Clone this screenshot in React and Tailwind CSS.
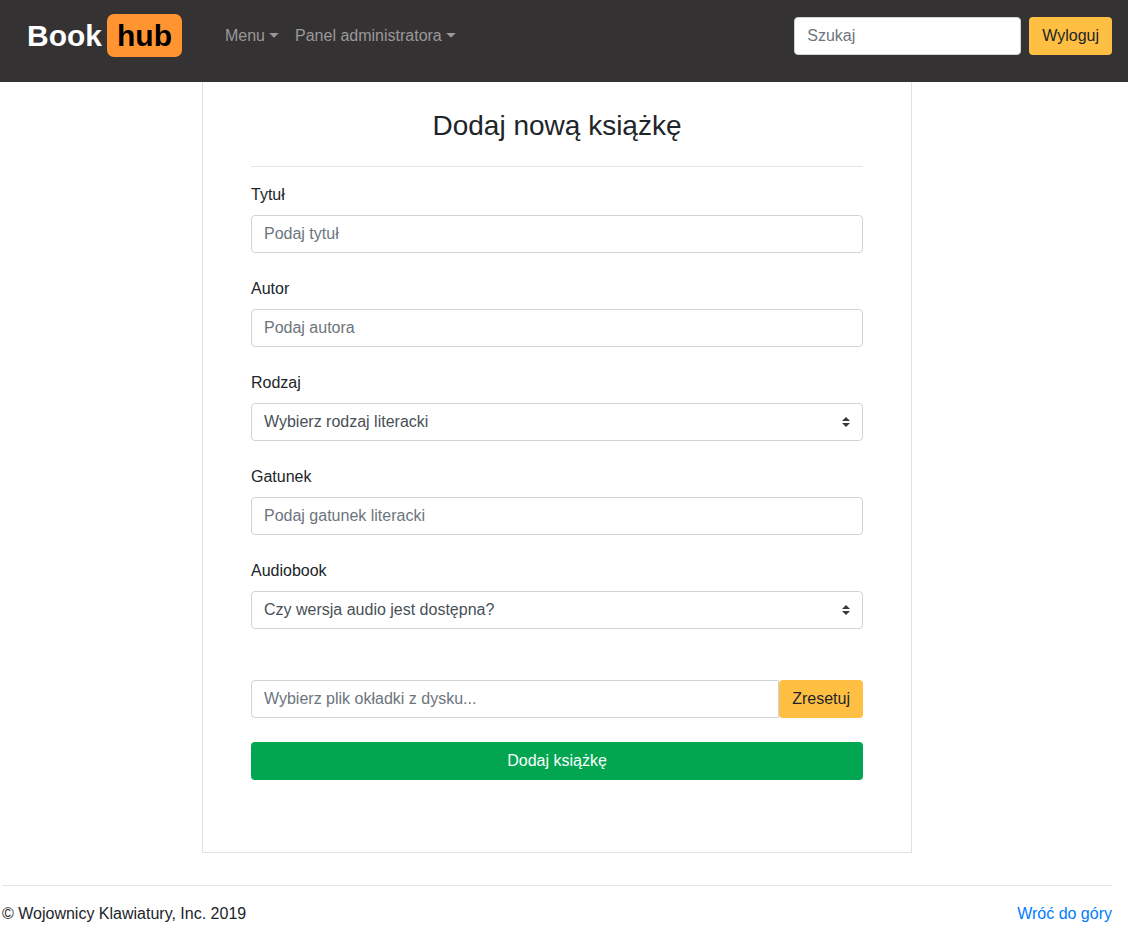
const control =
  'h-[38px] border border-[#ced4da] bg-white px-3 text-base text-[#495057] placeholder:text-[#6c757d] placeholder:opacity-100';

function Caret() {
  return (
    <svg className="mb-[2px] ml-1 h-[5px] w-[10px]" viewBox="0 0 10 5" fill="currentColor" aria-hidden="true">
      <path d="M0.2 0h9.6L5 4.8z" />
    </svg>
  );
}

function NavMenu({ children }) {
  return (
    <button type="button" className="flex items-center text-[#9a9899]">
      {children}
      <Caret />
    </button>
  );
}

function TextField({ id, label, placeholder }) {
  return (
    <div className="flex flex-col gap-2">
      <label htmlFor={id} className="self-start">{label}</label>
      <input id={id} type="text" placeholder={placeholder} className={`${control} w-full rounded`} />
    </div>
  );
}

function SelectField({ id, label, prompt, options }) {
  return (
    <div className="flex flex-col gap-2">
      <label htmlFor={id} className="self-start">{label}</label>
      <div className="relative">
        <select id={id} defaultValue="" className={`${control} block w-full appearance-none rounded`}>
          <option value="">{prompt}</option>
          {options.map((option) => (
            <option key={option}>{option}</option>
          ))}
        </select>
        <svg
          className="pointer-events-none absolute inset-y-0 right-[13px] my-auto h-[10px] w-2"
          viewBox="0 0 4 5"
          fill="#343a40"
          aria-hidden="true"
        >
          <path d="M2 0L0 2h4zm0 5L0 3h4z" />
        </svg>
      </div>
    </div>
  );
}

export default function App() {
  return (
    <div className="bg-white font-['Liberation_Sans',Arial,sans-serif] text-base text-[#212529]">
      <header className="bg-[#353233] pt-3.5 pr-4 pb-6 pl-[27px]">
        <div className="flex min-h-11 items-center">
          <a href="#" className="flex items-center gap-[5px] self-start text-[30px] leading-[43px] font-bold text-white">
            <span>Book</span>
            <span className="rounded-[7px] bg-[#ff9431] px-2.5 text-black">hub</span>
          </a>
          <nav className="ml-[43px] flex gap-4">
            <NavMenu>Menu</NavMenu>
            <NavMenu>Panel administratora</NavMenu>
          </nav>
          <form className="ml-auto flex gap-2">
            <input type="search" aria-label="Szukaj" placeholder="Szukaj" className={`${control} w-[227px] rounded`} />
            <button type="button" className="h-[38px] rounded bg-[#ffbf42] px-[13px]">Wyloguj</button>
          </form>
        </div>
      </header>

      <div className="mr-4 ml-[2px]">
        <main className="mx-auto max-w-[710px] border border-t-0 border-[#dee2e6] px-12 pt-[27px] pb-[72px]">
          <h1 className="text-center text-[28px] leading-[34px]">Dodaj nową książkę</h1>
          <hr className="mt-[23px] mb-4 border-[#e5e5e5]" />
          <form className="flex flex-col gap-6">
            <TextField id="title" label="Tytuł" placeholder="Podaj tytuł" />
            <TextField id="author" label="Autor" placeholder="Podaj autora" />
            <SelectField
              id="kind"
              label="Rodzaj"
              prompt="Wybierz rodzaj literacki"
              options={['Epika', 'Liryka', 'Dramat']}
            />
            <TextField id="genre" label="Gatunek" placeholder="Podaj gatunek literacki" />
            <SelectField
              id="audio"
              label="Audiobook"
              prompt="Czy wersja audio jest dostępna?"
              options={['Tak', 'Nie']}
            />
            <div className="mt-[27px] flex">
              <input
                type="text"
                aria-label="Plik okładki"
                placeholder="Wybierz plik okładki z dysku..."
                className={`${control} min-w-0 flex-1 rounded-l`}
              />
              <button type="reset" className="h-[38px] rounded bg-[#ffbf42] px-[13px]">Zresetuj</button>
            </div>
            <button type="button" className="h-[38px] rounded bg-[#02a651] text-white">Dodaj książkę</button>
          </form>
        </main>

        <footer className="mt-8 flex justify-between border-t border-[#e5e5e5] pt-4 pb-4">
          <p>© Wojownicy Klawiatury, Inc. 2019</p>
          <a href="#" className="text-[#007bff]">Wróć do góry</a>
        </footer>
      </div>
    </div>
  );
}
